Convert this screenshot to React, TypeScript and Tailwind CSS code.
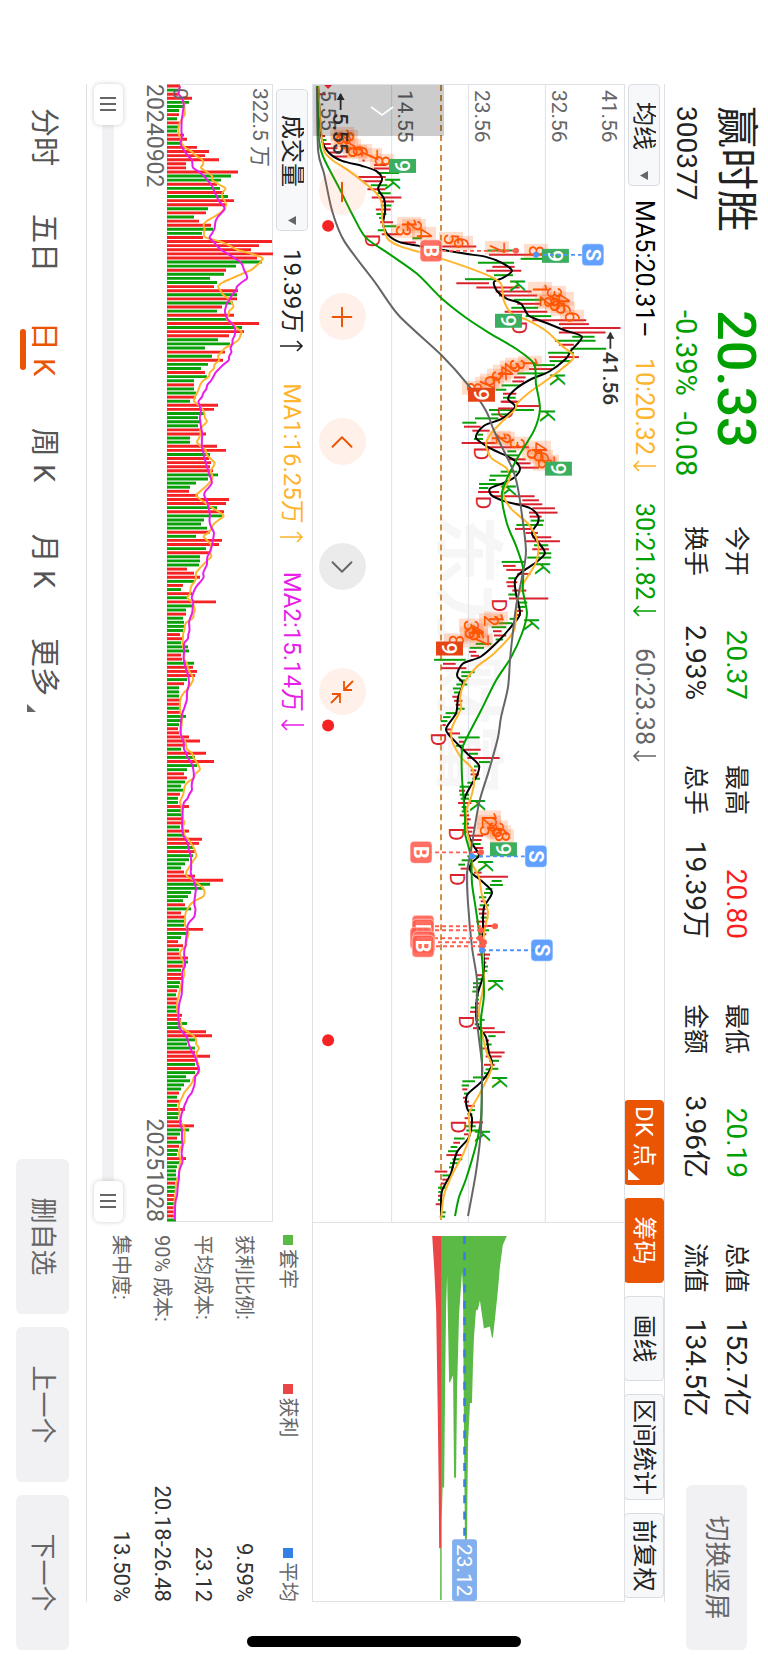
import { ReactNode } from "react";
import { clsx } from "clsx";
import { ChevronLeft, ChevronRight, Minus, Plus } from "lucide-react";

type Point = [number, number];

const PRICE_W = 1138;
const PRICE_H = 311;
const VOLUME_H = 106;
const CHIPS_W = 380;

const RED = "#d8232e";
const GREEN = "#0aa00a";

const STATS = [
  [{ label: "今开", value: "20.37", tone: "text-[#00a000]" }, { label: "换手", value: "2.93%", tone: "" }],
  [{ label: "最高", value: "20.80", tone: "text-[#fa1e1e]" }, { label: "总手", value: "19.39万", tone: "" }],
  [{ label: "最低", value: "20.19", tone: "text-[#00a000]" }, { label: "金额", value: "3.96亿", tone: "" }],
  [{ label: "总值", value: "152.7亿", tone: "" }, { label: "流值", value: "134.5亿", tone: "" }],
];

const TABS = ["分时", "五日", "日 K", "周 K", "月 K", "更多"];

const CHIP_ROWS = [
  { label: "获利比例:", value: "9.59%" },
  { label: "平均成本:", value: "23.12" },
  { label: "90% 成本:", value: "20.18-26.48" },
  { label: "集中度:", value: "13.50%" },
];

// Averages: [x, height above the base line]
const MA5: Point[] = [[1, 5], [36, 7], [56, 9], [68, 16], [76, 29], [81, 49], [86, 63], [94, 69], [104, 65], [114, 71], [126, 72], [139, 70], [149, 74], [157, 86], [161, 106], [165, 129], [169, 153], [172, 173], [178, 189], [186, 199], [193, 190], [197, 181], [206, 184], [214, 194], [219, 208], [231, 216], [238, 233], [246, 253], [252, 269], [266, 258], [274, 253], [287, 236], [294, 219], [304, 203], [314, 195], [322, 202], [334, 189], [341, 171], [353, 163], [364, 178], [374, 199], [384, 207], [393, 201], [399, 189], [404, 177], [411, 179], [417, 193], [423, 216], [431, 225], [438, 225], [449, 219], [461, 228], [469, 232], [478, 223], [488, 208], [496, 202], [509, 203], [529, 207], [541, 199], [556, 186], [572, 168], [579, 150], [591, 144], [599, 150], [613, 145], [629, 143], [645, 133], [658, 143], [671, 156], [681, 166], [691, 164], [701, 158], [716, 151], [733, 153], [746, 154], [759, 159], [771, 166], [779, 158], [788, 158], [797, 169], [808, 179], [823, 171], [839, 170], [859, 170], [886, 171], [899, 168], [913, 164], [939, 164], [953, 173], [969, 176], [981, 179], [997, 169], [1011, 154], [1024, 154], [1034, 159], [1053, 156], [1068, 144], [1089, 138], [1107, 129], [1122, 128], [1132, 128]];

const MA10: Point[] = [[1, 5], [46, 8], [66, 11], [75, 19], [84, 33], [96, 49], [108, 63], [119, 69], [133, 69], [153, 74], [161, 86], [167, 106], [174, 129], [182, 153], [191, 176], [199, 188], [216, 191], [229, 199], [236, 216], [246, 233], [261, 249], [272, 261], [284, 249], [296, 233], [308, 216], [319, 204], [325, 202], [338, 188], [349, 178], [359, 173], [373, 178], [383, 193], [393, 197], [408, 190], [424, 198], [440, 216], [459, 225], [478, 223], [498, 211], [516, 204], [546, 201], [569, 181], [583, 163], [599, 151], [613, 147], [624, 148], [643, 139], [656, 139], [673, 148], [684, 159], [699, 161], [713, 158], [728, 153], [746, 154], [763, 158], [779, 159], [793, 166], [811, 169], [828, 175], [849, 171], [879, 170], [899, 171], [926, 166], [943, 168], [966, 173], [982, 179], [995, 174], [1011, 166], [1030, 156], [1049, 157], [1068, 151], [1091, 139], [1111, 131], [1135, 128]];

const MA30: Point[] = [[1, 4], [56, 6], [74, 11], [103, 26], [133, 41], [153, 53], [169, 76], [189, 104], [214, 129], [233, 153], [248, 176], [264, 203], [279, 221], [299, 223], [324, 227], [346, 221], [376, 203], [408, 189], [439, 194], [461, 203], [483, 210], [506, 210], [529, 214], [549, 209], [573, 198], [596, 183], [626, 168], [653, 154], [666, 149], [693, 149], [733, 152], [749, 152], [773, 158], [799, 159], [826, 163], [863, 168], [909, 171], [936, 168], [979, 169], [999, 169], [1034, 168], [1061, 163], [1095, 153], [1113, 146], [1132, 142]];

const MA60: Point[] = [[3, 4], [66, 5], [89, 11], [126, 19], [156, 31], [199, 63], [231, 86], [271, 129], [299, 154], [326, 173], [346, 181], [383, 199], [399, 204], [423, 208], [466, 213], [493, 209], [523, 203], [556, 199], [576, 197], [603, 195], [633, 188], [653, 185], [686, 176], [719, 166], [766, 158], [789, 154], [819, 155], [863, 159], [896, 164], [936, 164], [979, 169], [995, 169], [1045, 168], [1088, 163], [1132, 155]];

// Sessions in four blocks: time, low and high in steps of the block; r rises, g falls
const SESSION_BLOCKS = [
  { start: -14, step: 1 / 3, data: "r70,60,80 r195,64,78 g207,66,82 r219,70,95 r232,80,115 r245,90,125 r257,100,145 r269,190,197 r282,225,262 r293,225,285 g306,235,300 r318,178,260 r331,190,250 g343,215,265 r355,205,258 g367,235,275 r380,218,307 r392,245,285 g404,245,277 r416,230,275 g429,232,262 g441,240,255 r454,243,282 g466,255,292 g478,236,262 r490,248,300 g502,340,365 r515,305,350 r527,360,532 g539,565,655 r552,570,740 g564,665,740 g576,537,645 r588,580,647 r600,562,667 g613,585,642 g625,498,590 r637,472,570 r650,532,662 r662,590,698 r674,600,715 g687,645,732 r699,655,725 g711,637,718 r723,617,745 g736,680,757 r748,700,862 r760,780,870 r772,790,965 r785,780,920 g798,820,887 g810,768,890 r822,780,825 g834,815,922 g846,747,825 r859,750,840 g871,752,815 g883,702,768 r895,690,760 g908,655,740 r920,645,680 r932,640,675 g944,608,665 g957,590,622 r969,612,652 g981,612,650 r993,605,658" },
  { start: 316, step: 1 / 3, data: "r3,610,655 r16,650,722 g28,570,705 g41,577,640 g53,528,598 g66,490,532 r78,495,545 r90,520,572 g102,535,552 g115,525,552 r127,488,590 r140,560,690 g152,625,652 g164,620,658 r176,630,680 r188,650,695 r201,660,720 g213,605,655 g225,572,635 g238,570,590 g250,540,620 g262,540,568 r274,537,600 r287,580,707 r299,670,720 r311,650,730 r323,700,768 r336,690,776 r348,692,728 g360,695,735 g373,652,732 r385,648,700 r397,680,717 r410,700,757 r422,680,783 g434,705,748 r446,700,750 g458,718,757 g471,685,757 g484,608,680 r496,612,650 r508,622,680 r520,655,695 g533,628,650 r545,622,655 r557,625,648 r570,640,682 g582,628,650 r594,630,748 g606,655,685 g619,655,680 r631,650,672 r643,650,665 g655,632,655 g668,598,640 g680,578,622 r692,582,608 r705,585,622 g717,590,612 g730,530,577 g742,512,555 r754,510,532 r766,515,540 g778,405,500 r790,432,470 r803,427,502 g815,487,527 g827,487,515 g840,480,500 g852,472,505 g864,462,485 g876,465,482 r889,460,478 r901,465,490 r913,470,485 g925,475,497 g938,440,475 g950,432,455 g962,425,445 r974,430,440 r987,440,458" },
  { start: 646, step: 1 / 3, data: "r9,445,483 g21,478,542 r34,480,498 g46,470,492 r58,485,545 g70,510,537 r83,505,602 g95,540,573 g108,525,543 r120,515,532 r132,515,540 g145,520,543 g157,505,523 g169,482,510 r181,480,498 g193,482,510 g205,485,510 r218,477,517 g230,488,503 g243,488,508 r255,482,510 r267,498,515 g280,490,510 r292,495,525 r304,498,520 r316,510,552 r329,515,548 g341,520,545 r353,530,553 r365,525,550 g378,505,550 g390,488,510 g403,478,498 r415,485,510 r427,525,548 r439,530,627 g452,578,608 g464,573,612 g476,560,580 g488,555,580 g501,540,562 r513,545,560 g525,542,570 r537,538,560 r550,540,563 g562,545,568 r574,532,560 r587,550,597 g600,550,570 r612,540,562 r624,540,555 r636,545,560 r648,540,560 g660,545,560 r673,535,573 r685,550,570 r697,548,562 g709,550,567 g722,550,565 r735,532,550 g747,535,553 g759,522,545 g771,522,540 g784,520,532 g796,530,540 g808,530,540 r820,528,540 g832,515,538 r845,513,540 g857,530,545 g869,535,557 g882,527,545 r894,522,587 r906,555,618 g918,568,590 r931,560,570 g943,560,578 r955,550,568 r967,565,617 r979,560,608 g992,570,600 r1004,555,587 g1016,570,598" },
  { start: 976, step: 1 / 2.6, data: "g24,560,580 g34,555,570 g45,522,565 g55,490,528 g66,488,510 r76,490,505 g87,495,510 r98,492,505 r108,495,510 r119,500,527 g130,510,528 g140,505,520 r151,497,512 r162,510,552 g172,500,530 g183,502,540 r193,495,508 g204,465,497 r215,463,483 g226,455,475 g237,447,475 r247,442,488 g258,460,490 g268,453,478 g279,450,465 r290,407,445 g300,430,450 r311,430,445 r321,425,437 g332,417,440 g343,418,430 r353,417,430 g364,417,428 r375,410,427 g396,425,440 g407,422,438" },
];

const SESSIONS = SESSION_BLOCKS.flatMap(({ start, step, data }) =>
  data.split(" ").map(item => {
    const [time, low, high] = item.slice(1).split(",").map(Number);
    return { up: item[0] === "r", x: start + time * step, low: low / 3 - 14, high: high / 3 - 14 };
  })
);

// Negative numbers are falling sessions
const VOLUMES = [
  13, -11, 11, 25, -22, -18, -12, 12, -10, 12, -12, -10, 17, 20, -14, 30, 42, 38, 52, 19, 19, 71, -64, -54, 50, -53, 57, -61, 67, 59, -41, 39, -27, 32, 44, -46, -35, 36, 105, 92, 84, 106, 90, -95, -69, 59, -57, -43, -50, 47, 71, -70, 70, -66, 55, -50, 67, -61, 92, -75, 77, 62, -51, -63, -38, 58, -45, 56, -41, -34, 38, -40, -27, 27, -27, -29, 29, -23, 51, 47,
  -37, -31, -33, -31, 34, 39, -23, -23, 50, 59, -43, 42, 44, 43, 46, -51, -41, -29, -23, 22, 31, 62, 59, -50, 57, -55, -37, -34, -40, 43, -29, 55, 52, -39, 42, -33, -33, -32, 20, 27, 33, -27, 16, -14, 25, -20, 49, -26, -19, 19, -16, -17, -18, -16, 13, 16, -14, -21, -22, 14, 15, -27, 26, 30, 28, -20, 17, -12, -12, -12, 14, 14, -13, 14, -19, -15, -12, 11, 12, 22, 33, 18, -14, 39, -28, 47, -30, -20, 17, 20, -18, -14, -16, 13, -11,
  -11, 22, -15, -16, 16, 18, -13, 22, -18, 35, 32, -26, 29, -26, -22, -18, -14, 17, 28, 56, -43, -37, -24, -21, -16, 18, -24, 14, 18, -17, -17, 36, -19, -14, 11, 16, -12, 12, 21, -21, 17, -14, 14, 15, -13, -12, 10, -9, 10, 10, -11, -11, 15, 14, -20, -14, 39, 45, -28, -20, -28, 28, 43, 30, -28, 31, -28, -19, -23, -17, -14, 12, -10, 12, -10, 18, -12, -11, 15, 27, -22, -13, 10, -16, 12, -11, -10, 19, -13, -10, -9, -9, -10, 8, -8, -8, 7, 7, -7, 8, 8, 8, -9,
];

const VOLUME_STEP = 1134 / (VOLUMES.length - 1);

const volumeAverage = (span: number): Point[] =>
  VOLUMES.map((_, i) => {
    const part = VOLUMES.slice(Math.max(0, i - span + 1), i + 1);
    return [2 + i * VOLUME_STEP, part.reduce((sum, v) => sum + Math.abs(v), 0) / part.length];
  });

const LETTERS: [string, number, number][] = [
  ["K", 93, 72], ["K", 195, 197], ["K", 289, 237], ["K", 325, 227], ["K", 400, 188], ["K", 478, 222], ["K", 534, 211], ["K", 715, 157], ["K", 776, 165], ["K", 895, 175], ["K", 992, 179], ["K", 1046, 162],
  ["D", 150, 52], ["D", 237, 199], ["D", 322, 185], ["D", 363, 161], ["D", 412, 163], ["D", 515, 179], ["D", 649, 118], ["D", 744, 136], ["D", 789, 137], ["D", 932, 146], ["D", 1037, 138],
];

const COUNTS: [number, number, number][] = [
  [1, 49, 29], [2, 52, 33], [3, 55, 30], [4, 61, 36], [5, 67, 42], [6, 66, 47], [7, 70, 57], [8, 76, 69],
  [1, 139, 96], [2, 141, 101], [3, 146, 90], [4, 149, 111], [5, 154, 138], [6, 158, 148], [7, 163, 184], [8, 166, 223],
  [1, 204, 227], [2, 216, 234], [3, 208, 241], [4, 214, 249], [5, 221, 244], [6, 224, 250], [8, 217, 238], [6, 232, 259],
  [1, 278, 217], [2, 283, 199], [3, 280, 204], [4, 287, 192], [5, 291, 186], [6, 296, 179], [7, 299, 174], [8, 303, 161],
  [1, 353, 186], [2, 354, 190], [3, 359, 204], [4, 363, 226], [5, 369, 221], [6, 372, 228], [7, 377, 234], [8, 379, 232],
  [1, 534, 183], [2, 536, 178], [3, 541, 158], [4, 546, 163], [5, 549, 159], [6, 551, 163], [7, 556, 168], [8, 556, 143],
  [1, 733, 176], [2, 738, 176], [3, 743, 183], [5, 746, 174], [6, 748, 186], [8, 752, 189],
];

const NINES: [number, number, string][] = [
  [74, 76, "#3cae60"], [164, 229, "#3cae60"], [229, 182, "#3cae60"], [303, 155, "#e64414"], [377, 232, "#3cae60"], [557, 123, "#e64414"], [758, 177, "#3cae60"],
];

// letter, x, height of the badge, height of the dot
const TRADES: [string, number, number, number][] = [
  ["B", 166, 118, 203], ["S", 170, 280, 223], ["B", 768, 108, 168], ["S", 772, 223, 159],
  ["B", 842, 110, 182], ["B", 846, 110, 168], ["B", 854, 108, 167], ["B", 858, 111, 171], ["B", 862, 110, 169], ["S", 866, 229, 169],
];

const TRAPPED: Point[] = [[13, 127.5], [13, 194], [22, 190], [45, 187], [68, 185], [88, 183], [115, 180], [115, 179], [104, 177], [106, 171], [92, 169], [78, 167], [87, 165], [88, 163], [115, 161], [142, 160], [181, 159], [181, 157], [222, 155], [315, 154], [326, 153], [326, 152], [222, 151], [68, 150], [49, 149], [92, 146], [168, 144], [256, 143], [256, 141], [153, 140], [160, 137], [160, 136], [107, 135], [53, 134], [84, 133], [161, 132], [266, 131], [266, 129.5], [300, 128.5], [379, 128.5], [379, 127]];
const PROFIT: Point[] = [[13, 119], [45, 121], [88, 123], [184, 124.5], [260, 125.5], [327, 126], [327, 128], [13, 128]];

function smooth(points: Point[], height: number) {
  const p = points.map(([x, v]) => [x, height - v]);
  let d = `M${p[0][0]} ${p[0][1]}`;
  for (let i = 0; i < p.length - 1; i++) {
    const a = p[Math.max(0, i - 1)];
    const b = p[i];
    const c = p[i + 1];
    const e = p[Math.min(p.length - 1, i + 2)];
    d += `C${b[0] + (c[0] - a[0]) / 7} ${b[1] + (c[1] - a[1]) / 7} ${c[0] - (e[0] - b[0]) / 7} ${c[1] - (e[1] - b[1]) / 7} ${c[0]} ${c[1]}`;
  }
  return d;
}

const polygon = (points: Point[]) => points.map(([x, v]) => `${x},${PRICE_H - v}`).join(" ");

function Arrow({ up = false }: { up?: boolean }) {
  return (
    <svg viewBox="0 0 14 24" className="h-6 w-3.5" fill="none" stroke="currentColor" strokeWidth="1.6" aria-hidden="true">
      {up ? <path d="M7 24V2M2 7l5-5 5 5" /> : <path d="M7 0v22M2 17l5 5 5-5" />}
    </svg>
  );
}

function Picker({ label, className, children }: { label: string; className: string; children: ReactNode }) {
  return (
    <div className="relative">
      <select
        aria-label={label}
        className={clsx("block h-8 appearance-none rounded border border-[#d9dce3] bg-[#f7f8fa] text-2xl leading-none text-[#222]", className)}
      >
        {children}
      </select>
      <svg viewBox="0 0 9 8" className="pointer-events-none absolute right-1.5 top-3 h-2 w-[9px]" aria-hidden="true">
        <path d="M0 0h9L4.500 8z" fill="#666" />
      </svg>
    </div>
  );
}

function Header() {
  return (
    <header className="flex h-[103px] items-start pl-[22px] pr-[13px]">
      <div className="w-[204px] pt-[11px] text-[#222]">
        <h1 className="text-[42px] leading-[42px]">赢时胜</h1>
        <p className="mt-[15px] text-[28px] leading-7">300377</p>
      </div>
      <div className="w-[216px] pt-[11px] text-[#00a000]">
        <p className="text-[54px] font-medium leading-[42px]">20.33</p>
        <p className="mt-[15px] flex gap-4 text-[29px] leading-7">
          <span>-0.39%</span>
          <span>-0.08</span>
        </p>
      </div>
      <div className="flex gap-[65px] pt-[11px]">
        {STATS.map(column => (
          <dl key={column[0].label} className="w-[174px] text-[#222]">
            {column.map(stat => (
              <div key={stat.label} className="flex h-[41px] items-center justify-between">
                <dt className="text-[25px]">{stat.label}</dt>
                <dd className={clsx("text-[28px]", stat.tone)}>{stat.value}</dd>
              </div>
            ))}
          </dl>
        ))}
      </div>
      <button type="button" className="ml-auto mt-[21px] h-[61px] w-[165px] rounded-md bg-[#f1f1f4] text-[26px] text-[#666]">
        切换竖屏
      </button>
    </header>
  );
}

function Toolbar() {
  const tool = "h-10 rounded border text-2xl";
  const plain = "border-[#d9dce3] bg-[#f7f8fa] text-[#222]";
  const active = "border-[#ea5504] bg-[#ea5504] text-white";
  return (
    <div className="mr-[61px] flex h-10 items-center border-t border-[#dfe1e6]">
      <Picker label="指标" className="w-[102px] pl-[17px]">
        <option>均线</option>
      </Picker>
      <div className="ml-3.5 flex items-center text-[25px] leading-8">
        <span className="w-[158px] text-black">MA5:20.31–</span>
        <span className="flex w-[145px] items-center gap-1 text-[#ffb42e]">10:20.32<Arrow /></span>
        <span className="flex w-[145px] items-center gap-1 text-[#00a000]">30:21.82<Arrow /></span>
        <span className="flex w-[145px] items-center gap-1 text-[#666]">60:23.38<Arrow /></span>
      </div>
      <div className="ml-auto mr-1 flex gap-[13px]">
        <button type="button" className={clsx(tool, active, "relative w-[85px] pr-3")}>
          DK 点
          <svg viewBox="0 0 11 12" className="absolute bottom-[3px] right-1 h-3 w-[11px]" aria-hidden="true">
            <path d="M11 0v12H0z" fill="#fff" />
          </svg>
        </button>
        <button type="button" className={clsx(tool, active, "w-[85px]")}>筹码</button>
        <button type="button" className={clsx(tool, plain, "w-[85px]")}>画线</button>
        <button type="button" className={clsx(tool, plain, "w-[106px]")}>区间统计</button>
        <button type="button" className={clsx(tool, plain, "w-[85px]")}>前复权</button>
      </div>
    </div>
  );
}

function PriceChart() {
  return (
    <svg viewBox={`0 0 ${PRICE_W} ${PRICE_H}`} className="block h-full w-full" fontSize="21" role="img" aria-label="日K线">
      <text x="570" y="181" textAnchor="middle" fontSize="70" fontWeight="700" fill="#f6f6f7">东方财富</text>
      <g stroke="#e1e4ea" strokeWidth="1.200">
        <path d="M0 78.500H1138M0 155.500H1138M0 232.500H1138" />
      </g>
      <path d={`M0 ${PRICE_H - 128}H${PRICE_W}`} stroke="#cf8f49" strokeWidth="2" strokeDasharray="6 4" />

      {SESSIONS.map((s, i) => (
        <path key={i} d={`M${s.x} ${PRICE_H - s.low}V${PRICE_H - s.high}`} stroke={s.up ? RED : GREEN} strokeWidth="2" />
      ))}

      <g fill="#666">
        <text x="5" y="22">41.56</text>
        <text x="5" y="72">32.56</text>
        <text x="5" y="149">23.56</text>
        <text x="5" y="226">14.55</text>
        <text x="5" y="303">5.55</text>
      </g>

      {COUNTS.map(([, x, v], i) => (
        <rect key={i} x={x - 7} y={PRICE_H - v - 12} width="14" height="24" fill="#ff6a20" opacity="0.22" />
      ))}
      {COUNTS.map(([n, x, v], i) => (
        <text key={i} x={x} y={PRICE_H - v + 7} textAnchor="middle" fill="#ff5500">{n}</text>
      ))}

      {LETTERS.map(([letter, x, v], i) => (
        <text key={i} x={x - 1} y={PRICE_H - v} fill={letter === "K" ? GREEN : RED}>{letter}</text>
      ))}

      <g fill="none" strokeWidth="2">
        <path d={smooth(MA5, PRICE_H)} stroke="#000" />
        <path d={smooth(MA10, PRICE_H)} stroke="#ffb42e" />
        <path d={smooth(MA30, PRICE_H)} stroke="#00a000" />
        <path d={smooth(MA60, PRICE_H)} stroke="#666" />
      </g>

      {NINES.map(([x, v, fill]) => (
        <g key={x}>
          <rect x={x} y={PRICE_H - v - 27} width="14" height="27" fill={fill} />
          <text x={x + 7} y={PRICE_H - v - 6} textAnchor="middle" fontWeight="500" fill="#fff">9</text>
        </g>
      ))}

      {TRADES.map(([side, x, badge, dot]) => {
        const color = side === "B" ? "#ff5c4d" : "#4c93ff";
        return (
          <g key={x}>
            <path d={`M${x} ${PRICE_H - dot}V${PRICE_H - badge}`} stroke={color} strokeWidth="1.800" strokeDasharray="4 3" />
            <circle cx={x} cy={PRICE_H - dot} r="3" fill={color} />
            <rect x={x - 11} y={PRICE_H - badge - 11} width="22" height="22" rx="4" fill={color} fillOpacity="0.88" stroke="#fff" strokeOpacity="0.5" />
            <text x={x} y={PRICE_H - badge + 7} textAnchor="middle" fontSize="20" fontWeight="700" fill="#fff">{side}</text>
          </g>
        );
      })}

      <g fill="none" stroke="#333" strokeWidth="1.800">
        <path d="M25 283.500H9M264 13.500H248" />
      </g>
      <g fill="#333" fontWeight="500">
        <path d="M8 283.500l7-4v8zM247 13.500l7-4v8z" />
        <text x="28" y="291">5.55</text>
        <text x="267" y="21">41.56</text>
      </g>

      <circle cx="141" cy="296" r="6" fill="#f52323" />
      <circle cx="641" cy="296" r="6" fill="#f52323" />
      <circle cx="956" cy="296" r="6" fill="#f52323" />

      <rect x="0" y="180" width="51" height="131" fill="#000" opacity="0.2" />
      <path d="M22 231l8 11-8 11" fill="none" stroke="#fff" strokeWidth="1.800" />
      <path d="M0 292l4 4-4 4z" fill={RED} />
    </svg>
  );
}

function ChartControls() {
  const round = "flex size-[47px] items-center justify-center rounded-full";
  const warm = "bg-[#ff6a20]/10 text-[#ea5504]";
  return (
    <div className="absolute bottom-1.5 left-[83px] flex gap-[78px]">
      <button type="button" aria-label="缩小" className={clsx(round, warm)}><Minus size={32} strokeWidth={1.5} /></button>
      <button type="button" aria-label="放大" className={clsx(round, warm)}><Plus size={32} strokeWidth={1.5} /></button>
      <button type="button" aria-label="左移" className={clsx(round, warm)}><ChevronLeft size={38} strokeWidth={1.200} /></button>
      <button type="button" aria-label="右移" className={clsx(round, "bg-black/8 text-[#666]")}><ChevronRight size={38} strokeWidth={1.200} /></button>
      <button type="button" aria-label="收起" className={clsx(round, warm)}>
        <svg viewBox="0 0 24 24" className="size-6" fill="none" stroke="currentColor" strokeWidth="1.800" aria-hidden="true">
          <path d="M1 1l9 9M10 2v8H1M23 23l-9-9M14 22v-8h9" />
        </svg>
      </button>
    </div>
  );
}

function ChipsChart() {
  return (
    <svg viewBox={`0 0 ${CHIPS_W} ${PRICE_H}`} className="block h-full w-full" role="img" aria-label="筹码分布">
      <polygon points={polygon(TRAPPED)} fill="#5bba45" />
      <polygon points={polygon(PROFIT)} fill="#ea4648" />
      <path d="M13 159.500H318" stroke="#3580e4" strokeWidth="2.600" strokeDasharray="8 8.300" />
      <rect x="318" y="147" width="62" height="25" rx="3" fill="#82afee" />
      <text x="349" y="167" textAnchor="middle" fontSize="21" fill="#fff">23.12</text>
    </svg>
  );
}

function VolumeHeader() {
  return (
    <div className="flex h-10 items-center border-t border-[#dfe1e6] pl-[5px] text-2xl leading-8">
      <Picker label="副图指标" className="w-[142px] pl-[25px]">
        <option>成交量</option>
      </Picker>
      <span className="ml-[18px] flex items-center gap-1.5 text-[#222]">19.39万<Arrow up /></span>
      <span className="ml-[30px] flex items-center gap-1.5 text-[#ffb42e]">MA1:16.25万<Arrow up /></span>
      <span className="ml-[28px] flex items-center gap-1.5 text-[#e81ee8]">MA2:15.14万<Arrow /></span>
    </div>
  );
}

function VolumeChart() {
  return (
    <svg viewBox={`0 0 ${PRICE_W} ${VOLUME_H}`} className="block w-full" role="img" aria-label="成交量">
      <rect x="0.500" y="0.500" width={PRICE_W - 1} height={VOLUME_H - 1} fill="none" stroke="#dfe1e6" />
      {VOLUMES.map((v, i) => {
        const x = 2 + i * VOLUME_STEP;
        return (
          <path key={i} d={`M${x} ${VOLUME_H}v${-Math.abs(v)}`} stroke={v > 0 ? "#f52323" : GREEN} strokeWidth="2.900" />
        );
      })}
      <g fill="none" strokeWidth="2">
        <path d={smooth(volumeAverage(5), VOLUME_H)} stroke="#ffb42e" />
        <path d={smooth(volumeAverage(10), VOLUME_H)} stroke="#e81ee8" />
      </g>
      <g fill="#666" fontSize="21">
        <text x="4" y="20">322.5 万</text>
        <text x="4" y="100">0</text>
      </g>
    </svg>
  );
}

function RangeHandle({ label, value }: { label: string; value: number }) {
  return (
    <input
      type="range"
      aria-label={label}
      defaultValue={value}
      className="pointer-events-none absolute inset-0 h-[29px] w-full appearance-none bg-transparent [&::-webkit-slider-thumb]:pointer-events-auto [&::-webkit-slider-thumb]:h-[29px] [&::-webkit-slider-thumb]:w-[41px] [&::-webkit-slider-thumb]:appearance-none [&::-webkit-slider-thumb]:rounded-md [&::-webkit-slider-thumb]:bg-white [&::-webkit-slider-thumb]:bg-[linear-gradient(90deg,transparent_13px,#666_13px_15px,transparent_15px_19px,#666_19px_21px,transparent_21px_25px,#666_25px_27px,transparent_27px)] [&::-webkit-slider-thumb]:bg-[length:41px_16px] [&::-webkit-slider-thumb]:bg-center [&::-webkit-slider-thumb]:bg-no-repeat [&::-webkit-slider-thumb]:shadow-[0_0_5px_rgba(0,0,0,0.2)]"
    />
  );
}

function ChipsPanel() {
  const legend = [
    { label: "套牢", box: "bg-[#5bba45]", space: "" },
    { label: "获利", box: "bg-[#ea4648]", space: "mr-4" },
    { label: "平均", box: "bg-[#3580e4]", space: "" },
  ];
  return (
    <div className="border-t border-[#dfe1e6] pl-[13px] text-[#666]">
      <ul className="flex h-[47px] items-center justify-between text-xl">
        {legend.map(item => (
          <li key={item.label} className={clsx("flex items-center gap-1", item.space)}>
            <span className={clsx("size-2.5", item.box)} />
            {item.label}
          </li>
        ))}
      </ul>
      <dl>
        {CHIP_ROWS.map(row => (
          <div key={row.label} className="flex h-[41px] items-center justify-between">
            <dt className="text-xl">{row.label}</dt>
            <dd className="text-[22px] text-[#333]">{row.value}</dd>
          </div>
        ))}
      </dl>
    </div>
  );
}

function Footer() {
  return (
    <footer className="flex h-[86px] items-center justify-between pr-[13px]">
      <nav className="flex">
        {TABS.map(tab => (
          <a
            key={tab}
            href="#"
            className={clsx("relative flex h-12 w-[106px] items-center justify-center text-[29px]", tab === "日 K" ? "text-[#ea5504]" : "text-[#555]")}
          >
            {tab}
            {tab === "日 K" && <span className="absolute bottom-px h-1.5 w-[41px] rounded-full bg-[#ea5504]" />}
            {tab === "更多" && (
              <svg viewBox="0 0 8 9" className="absolute bottom-2 right-2 h-[9px] w-2" aria-hidden="true">
                <path d="M8 0v9H0z" fill="#666" />
              </svg>
            )}
          </a>
        ))}
      </nav>
      <div className="flex gap-[13px]">
        {["删自选", "上一个", "下一个"].map(name => (
          <button key={name} type="button" className="h-[53px] w-[155px] rounded-md bg-[#f1f1f4] text-[26px] text-[#666]">
            {name}
          </button>
        ))}
      </div>
    </footer>
  );
}

export default function App() {
  return (
    <div className="h-screen w-screen overflow-hidden bg-white">
      {/* Landscape page on a portrait screen */}
      <div className="relative flex h-[100vw] w-[100vh] origin-top-left translate-x-[100vw] rotate-90 flex-col pl-[84px] font-['Roboto','Noto_Sans_CJK_SC',sans-serif]">
        <Header />
        <Toolbar />
        <main className="mr-[61px] flex min-h-0 flex-1 border-b border-[#dfe1e6]">
          <div className="flex min-w-0 flex-1 flex-col">
            <div className="relative min-h-0 flex-1 border-l border-t border-[#dfe1e6]">
              <PriceChart />
              <ChartControls />
            </div>
            <VolumeHeader />
            <VolumeChart />
            <div className="flex justify-between pt-px text-[23px] leading-6 text-[#666]">
              <time dateTime="2024-09-02">20240902</time>
              <time dateTime="2025-10-28">20251028</time>
            </div>
            <div className="relative mb-[7px] mt-[19px] flex h-[29px] items-center">
              <div className="h-3 w-full bg-[#f1f1f4]" />
              <RangeHandle label="开始日期" value={0} />
              <RangeHandle label="结束日期" value={100} />
            </div>
          </div>
          <div className="flex w-[380px] flex-col">
            <div className="min-h-0 flex-1 border border-b-0 border-[#dfe1e6]">
              <ChipsChart />
            </div>
            <div className="h-[226px]">
              <ChipsPanel />
            </div>
          </div>
        </main>
        <Footer />
        <div className="absolute inset-y-0 right-4 my-auto h-[274px] w-[11px] rounded-full bg-black" />
      </div>
    </div>
  );
}
